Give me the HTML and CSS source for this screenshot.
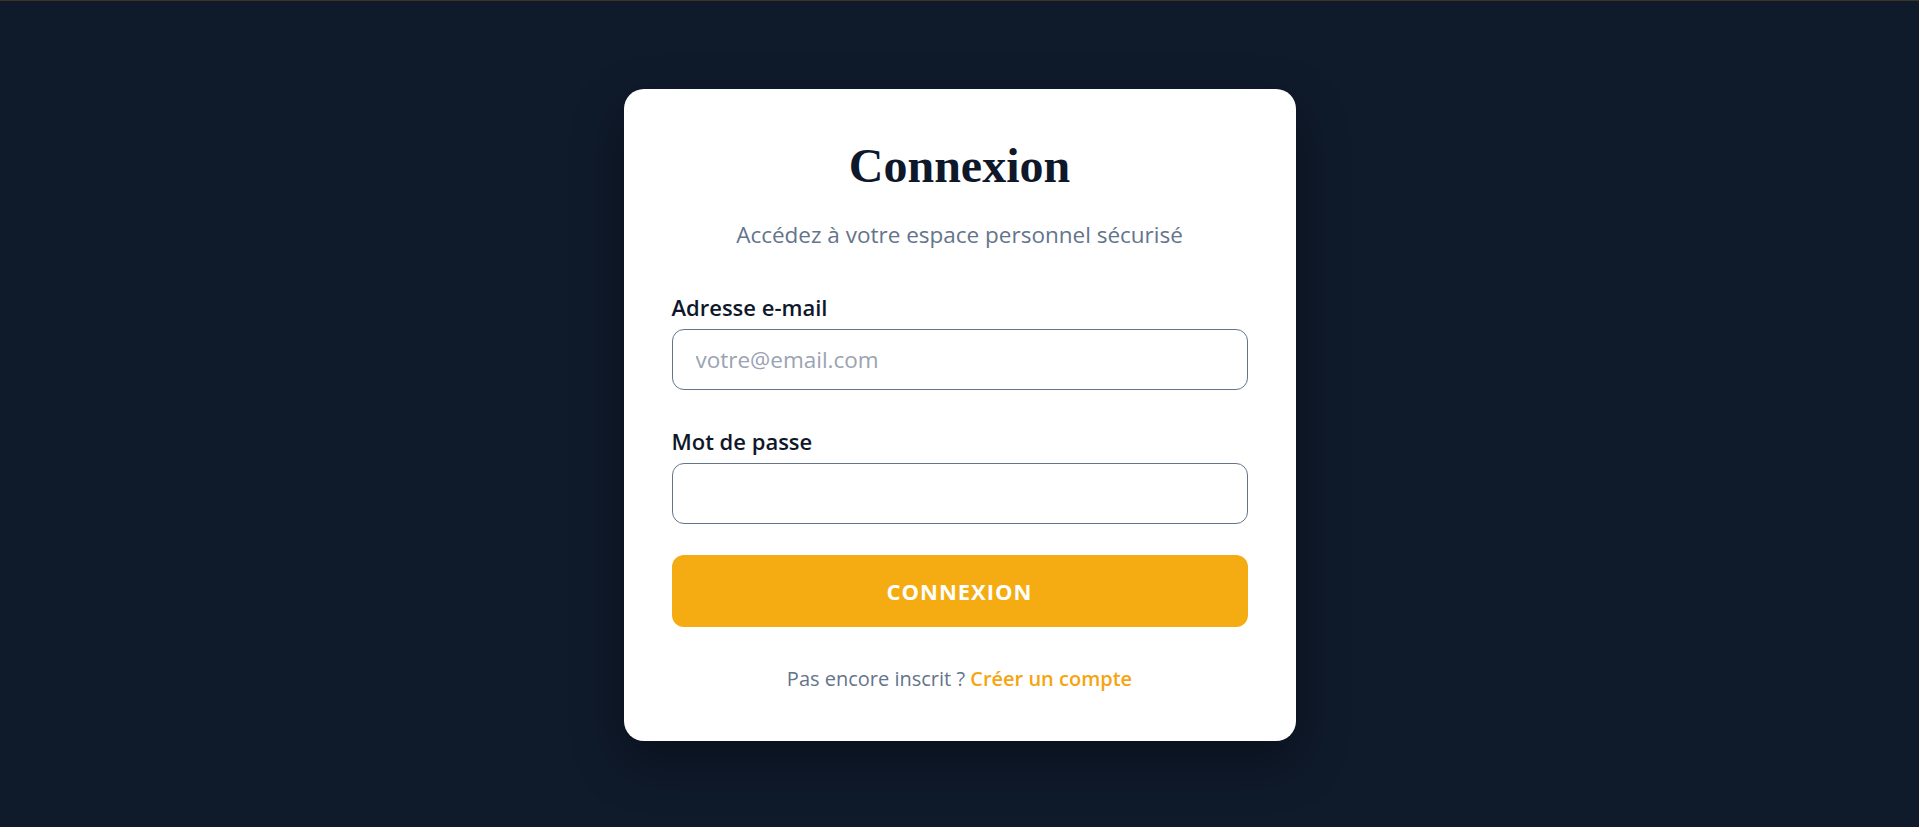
FILE: index.html
```html
<!DOCTYPE html>
<html lang="fr">
<head>
<meta charset="utf-8">
<title>Connexion</title>
<link rel="stylesheet" href="styles.css">
</head>
<body>
<div class="topline"></div>
<main class="page">
  <form class="card">
    <h1 class="title">Connexion</h1>
    <p class="subtitle">Accédez à votre espace personnel sécurisé</p>
    <div class="field">
      <label class="label" for="email">Adresse e-mail</label>
      <input class="input" id="email" type="email" placeholder="votre@email.com">
    </div>
    <div class="field">
      <label class="label" for="pwd">Mot de passe</label>
      <input class="input" id="pwd" type="password">
    </div>
    <button class="btn" type="button">CONNEXION</button>
    <p class="footer">Pas encore inscrit ? <a class="link" href="#">Créer un compte</a></p>
  </form>
</main>
</body>
</html>
```
FILE: styles.css
```css
* { box-sizing: border-box; }
html, body { margin: 0; padding: 0; }
body {
  background: #0f1a2b;
  font-family: "Open Sans", "Noto Sans", sans-serif;
  min-height: 827px;
}
.topline { height: 1px; background: #3d3422; }
.page {
  display: flex;
  justify-content: center;
  padding-top: 88px;
}
.card {
  width: 672px;
  background: #ffffff;
  border-radius: 20px;
  padding: 48px 48px 48px;
  display: flex;
  flex-direction: column;
  box-shadow: 0 20px 50px rgba(0, 0, 0, 0.35);
}
.title {
  margin: 0;
  text-align: center;
  font-family: "Liberation Serif", "DejaVu Serif", serif;
  font-weight: 700;
  font-size: 48px;
  line-height: 1.2;
  color: #0f172a;
}
.subtitle {
  margin: 23px 0 0;
  text-align: center;
  color: #64748b;
  font-size: 22.5px;
  line-height: 34px;
}
.field {
  display: flex;
  flex-direction: column;
  margin-top: 40px;
}
.field + .field { margin-top: 36px; }
.label {
  font-weight: 600;
  font-size: 22px;
  line-height: 30px;
  color: #0f172a;
  margin-bottom: 7px;
}
.input {
  height: 61px;
  border: 1px solid #64748b;
  border-radius: 12px;
  padding: 0 23px;
  font-family: inherit;
  font-size: 22.5px;
  color: #0f172a;
  outline: none;
}
.input::placeholder { color: #9aa3b2; }
.btn {
  margin-top: 31px;
  height: 72px;
  border: 0;
  border-radius: 12px;
  background: #f5ac12;
  color: #ffffff;
  font-family: inherit;
  font-weight: 700;
  font-size: 22px;
  letter-spacing: 1px;
  cursor: pointer;
}
.footer {
  margin: 38px 0 0;
  text-align: center;
  color: #64748b;
  font-size: 20px;
  line-height: 28px;
}
.link {
  color: #f5a511;
  font-weight: 600;
  text-decoration: none;
}
```
